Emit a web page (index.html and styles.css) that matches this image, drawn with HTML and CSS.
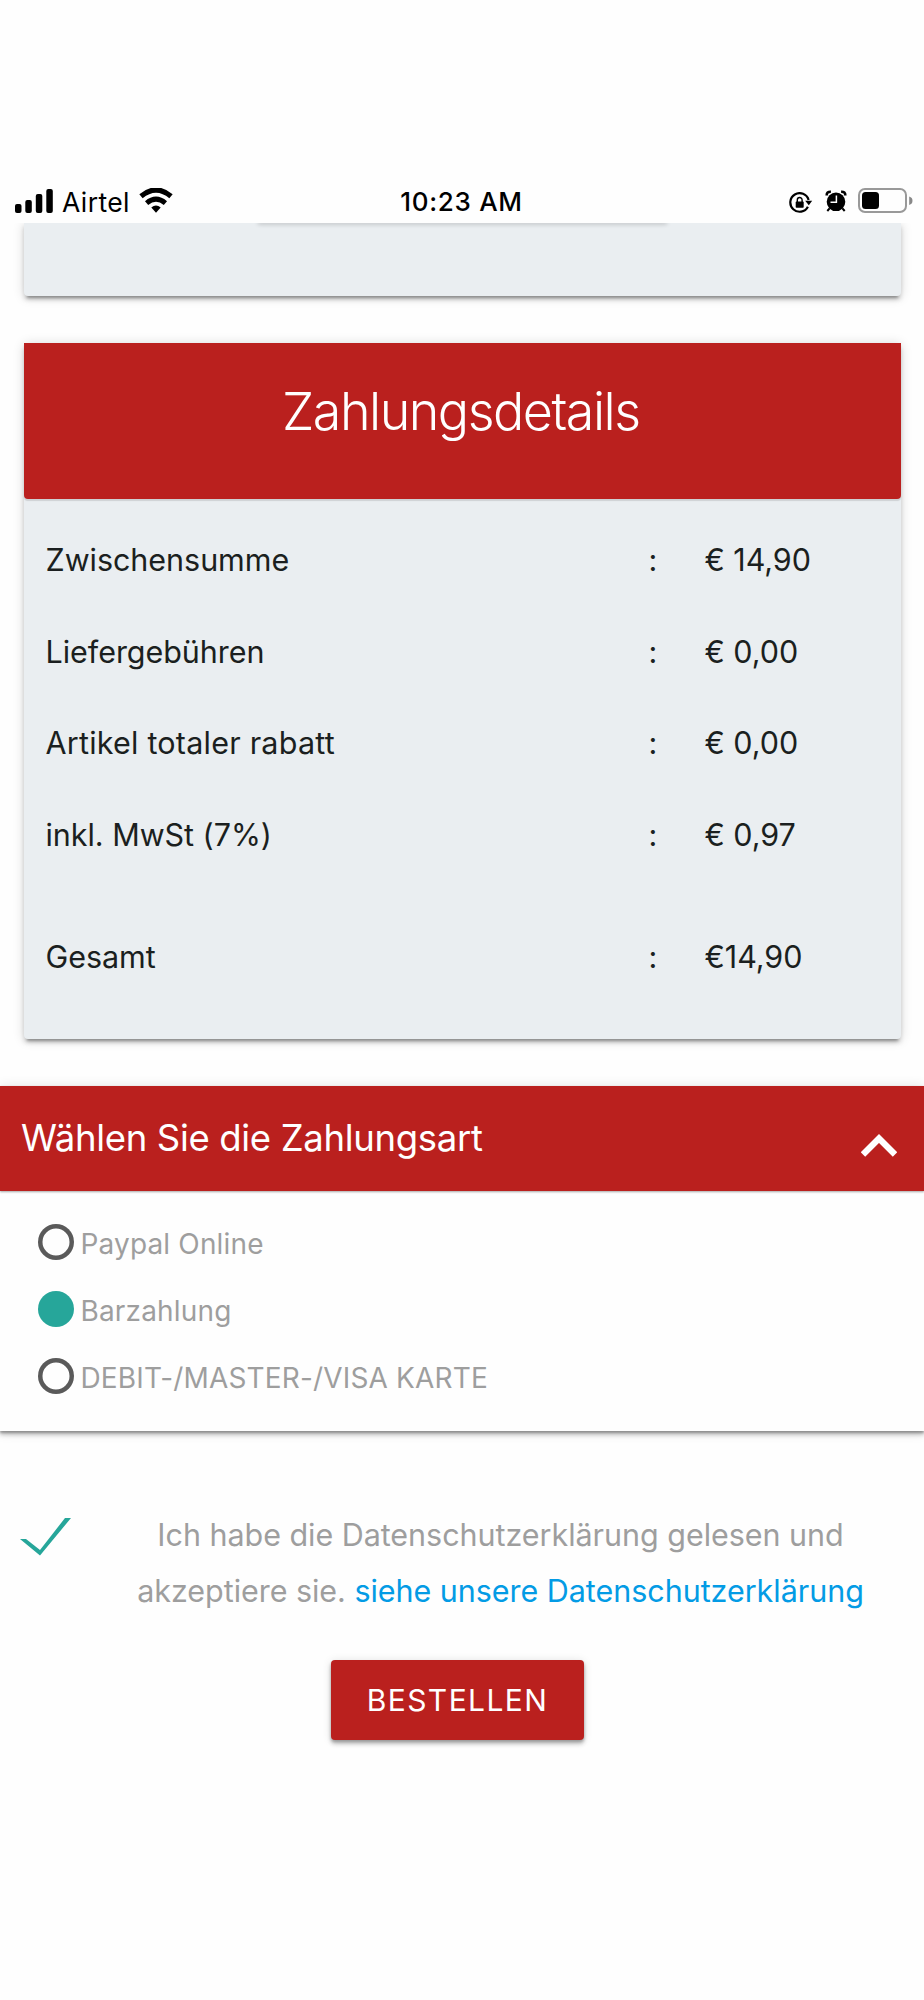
FILE: index.html
```html
<!DOCTYPE html>
<html lang="de">
<head>
<meta charset="utf-8">
<title>Zahlungsdetails</title>
<link rel="stylesheet" href="styles.css">
</head>
<body>
<header class="status">
  <div class="status-left">
    <svg class="signal" width="38" height="24" viewBox="0 0 38 24"><rect x="0" y="15" width="6.5" height="9" rx="2"/><rect x="10.3" y="11" width="6.5" height="13" rx="2"/><rect x="20.8" y="5" width="6.5" height="19" rx="2"/><rect x="31.3" y="0" width="6.5" height="24" rx="2"/></svg>
    <span class="carrier">Airtel</span>
    <svg class="wifi" width="34" height="25" viewBox="0 0 34 25"><path d="M2 8.2Q17-4.200 32 8.200" fill="none" stroke="#000" stroke-width="5.200"/><path d="M7.600 15.100Q17 7.200 26.400 15.100" fill="none" stroke="#000" stroke-width="5"/><path d="M12.300 19.600Q17 15.600 21.700 19.600L17 24.700Z"/></svg>
  </div>
  <time class="clock">10:23 AM</time>
  <div class="status-right">
    <svg class="lock" width="24" height="22" viewBox="0 0 24 22"><path d="M18.900 14.700A9.300 9.300 0 1 1 19.600 8" fill="none" stroke="#000" stroke-width="2.200"/><path d="M16.200 8.700h7L19.800 13.200Z"/><rect x="6.700" y="9.600" width="8" height="6.200" rx=".8"/><path d="M8.300 10V7.900a2.400 2.400 0 0 1 4.800 0V10" fill="none" stroke="#000" stroke-width="1.400"/></svg>
    <svg class="alarm" width="22" height="22" viewBox="0 0 22 22"><circle cx="11" cy="11.800" r="9.300"/><path d="M1.700 5.500Q1.500 1.500 5.900 1.700M20.300 5.500Q20.500 1.500 16.100 1.700" fill="none" stroke="#000" stroke-width="2.600"/><path d="M4.600 18.300L2.300 21M17.400 18.300L19.700 21" stroke="#000" stroke-width="2"/><path d="M11.400 5.400V12.300H5.500" fill="none" stroke="#fff" stroke-width="1.500"/></svg>
    <svg class="battery" width="55" height="25" viewBox="0 0 55 25"><rect x="1" y="1" width="47" height="23" rx="6" fill="none" stroke="#999" stroke-width="2"/><rect x="4" y="4" width="17" height="17" rx="3.500"/><path d="M51.200 8.500Q54.500 9.500 54.500 12.700T51.200 17Z" fill="#888"/></svg>
  </div>
</header>
<main>
  <div class="viewport-top">
    <section class="card previous"><div class="previous-item"></div></section>
  </div>
  <section class="card details">
    <h1 class="details-title">Zahlungsdetails</h1>
    <div class="details-body">
      <div class="row"><span class="label">Zwischensumme</span><span>:</span><span class="amount">€ 14,90</span></div>
      <div class="row"><span class="label">Liefergebühren</span><span>:</span><span class="amount">€ 0,00</span></div>
      <div class="row"><span class="label discount">Artikel totaler rabatt</span><span>:</span><span class="amount">€ 0,00</span></div>
      <div class="row"><span class="label">inkl. MwSt (7%)</span><span>:</span><span class="amount">€ 0,97</span></div>
      <div class="row total"><span class="label">Gesamt</span><span>:</span><span class="amount">€14,90</span></div>
    </div>
  </section>
  <section class="payment">
    <h2 class="payment-title"><span>Wählen Sie die Zahlungsart</span><svg class="chevron" width="36" height="24" viewBox="0 0 36 24"><path d="M2 20.500L18 4.500L34 20.500" fill="none" stroke="#fff" stroke-width="6.200"/></svg></h2>
    <div class="options">
      <div class="option"><i class="radio"></i><span>Paypal Online</span></div>
      <div class="option"><i class="radio checked"></i><span>Barzahlung</span></div>
      <div class="option"><i class="radio"></i><span>DEBIT-/MASTER-/VISA KARTE</span></div>
    </div>
  </section>
  <section class="terms">
    <svg class="check" width="52" height="38" viewBox="0 0 52 38"><path d="M0 21h6L20 32L45 0h6L20 37.500Z" fill="#26a69a"/></svg>
    <p class="terms-text">Ich habe die Datenschutzerklärung gelesen und<br>akzeptiere sie. <a>siehe unsere Datenschutzerklärung</a></p>
  </section>
  <button class="order">BESTELLEN</button>
</main>
</body>
</html>
```
FILE: styles.css
```css
* { box-sizing: border-box; }
body { margin: 0; height: 2000px; background: #fefefe; font-family: Inter, "Liberation Sans", sans-serif; color: #1b1f20; overflow: hidden; }
svg { display: block; flex: none; }
h1, h2, p { margin: 0; font-weight: 400; }
.status { height: 223px; padding: 179px 11px 0 15px; display: grid; grid-template-columns: 1fr auto 1fr; align-items: start; color: #000; font-size: 26px; line-height: 46px; white-space: nowrap; }
.status-left { display: flex; }
.signal { margin-top: 10px; }
.carrier { margin-left: 9px; width: 67px; font-size: 26.500px; letter-spacing: .4px; }
.wifi { margin: 9px 0 0 10px; }
.clock { font-weight: 550; letter-spacing: .7px; padding-right: 5px; }
.status-right { display: flex; justify-content: flex-end; }
.lock { margin: 13px 12px 0 0; }
.alarm { margin: 11px 11px 0 0; }
.battery { margin: 9px 0 0; }
.card { margin: 0 23.500px 0 24px; background: #eaeef1; border-radius: 4px; box-shadow: 0 4px 4px rgba(0,0,0,.14), 0 5px 3px -3px rgba(0,0,0,.3), 0 1px 12px rgba(0,0,0,.16); }
.viewport-top { height: 97px; overflow: hidden; }
.previous { height: 73px; border-radius: 0 0 4px 4px; padding: 0 235px; }
.previous-item { height: 0; box-shadow: 0 0 4px 1px rgba(0,0,0,.3); }
.details { margin-top: 23px; height: 696px; }
.details-title { height: 156px; padding: 32px 3px 0 0; background: #ba201e; border-radius: 0 0 4px 4px; box-shadow: 0 2px 1px rgba(0,0,0,.12); color: #fff; text-align: center; font-size: 52px; font-weight: 300; line-height: 74px; letter-spacing: -1.500px; }
.details-body { padding: 15px 22px 0 21.500px; }
.row { display: grid; grid-template-columns: 603px 56px 1fr; height: 91.500px; line-height: 91.500px; font-size: 30.500px; letter-spacing: -.04px; white-space: nowrap; }
.discount { letter-spacing: .22px; }
.total { margin-top: 31px; }
.payment { margin-top: 47px; height: 345px; background: #fefefe; box-shadow: 0 4px 4px rgba(0,0,0,.2), 0 2px 2px rgba(0,0,0,.25), 0 1px 12px rgba(0,0,0,.12); }
.payment-title { height: 105px; padding: 21px 27px 0 21px; display: flex; justify-content: space-between; background: #ba201e; box-shadow: 0 1px 2px rgba(0,0,0,.35); color: #fff; font-size: 36.500px; line-height: 62px; letter-spacing: -.33px; }
.chevron { margin-top: 27px; }
.options { padding: 18px 38px 0; }
.option { display: flex; align-items: center; height: 67px; color: #9e9e9e; font-size: 28px; line-height: 64px; letter-spacing: .16px; white-space: nowrap; }
.option span { padding-top: 3px; }
.radio { flex: none; width: 36px; height: 36px; margin: -1px 6.500px 0 0; border-radius: 50%; box-shadow: inset 0 0 0 4.500px #5a5a5a; }
.checked { box-shadow: none; background: #26a69a; }
.terms { display: flex; margin-top: 76px; padding-left: 20px; height: 125px; }
.check { margin-top: 11px; }
.terms-text { width: 860px; padding-left: 5px; text-align: center; font-size: 30.500px; line-height: 56px; letter-spacing: -.04px; color: #9e9e9e; white-space: nowrap; }
.terms-text a { color: #039be5; }
.order { display: block; width: 253px; height: 80px; margin: 28px 0 0 331px; padding: 0; border: 0; border-radius: 4px; background: #ba201e; box-shadow: 0 4px 4px rgba(0,0,0,.2), 0 2px 3px rgba(0,0,0,.2), 0 1px 10px rgba(0,0,0,.12); color: #fff; font: 400 30px/80px Inter, "Liberation Sans", sans-serif; letter-spacing: 1.400px; }
```
